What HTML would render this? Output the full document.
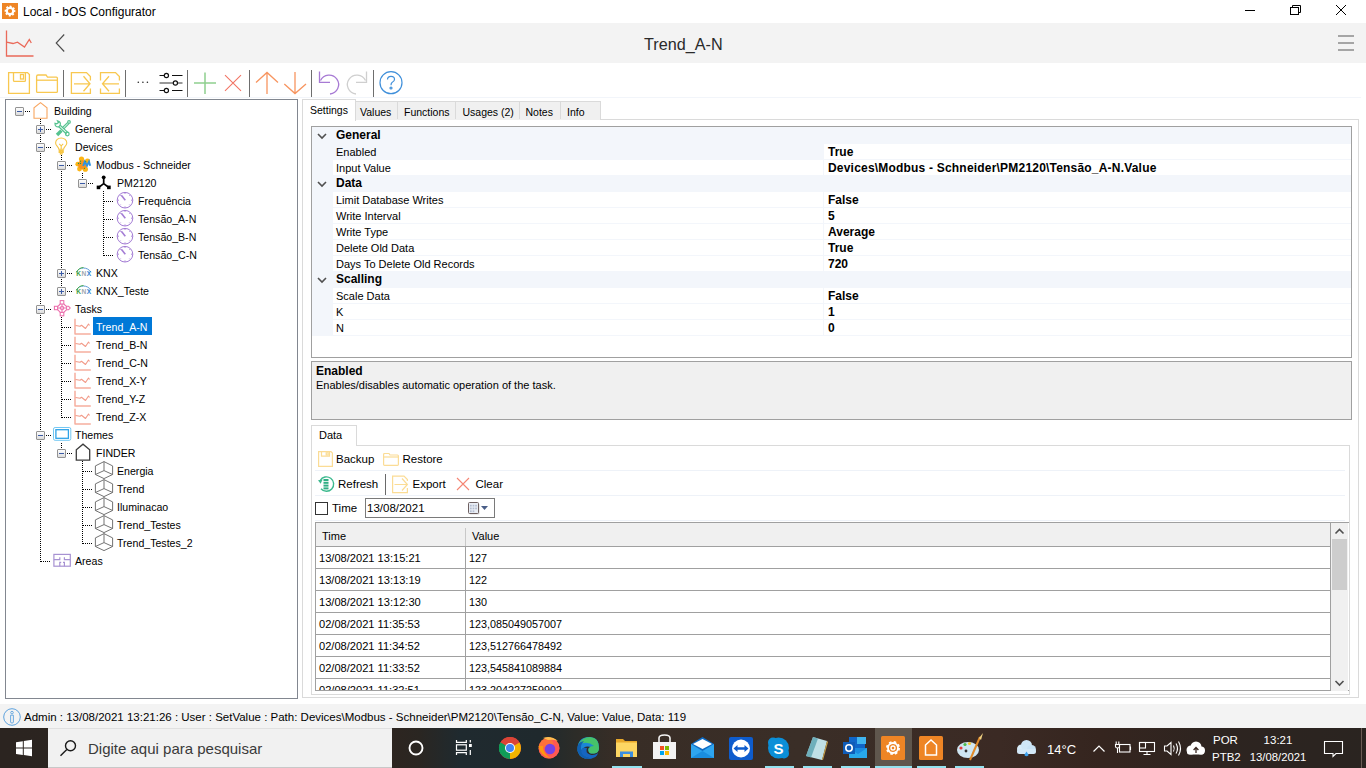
<!DOCTYPE html>
<html><head><meta charset="utf-8">
<style>
*{margin:0;padding:0;box-sizing:border-box}
html,body{width:1366px;height:768px;overflow:hidden;background:#fff;font-family:"Liberation Sans",sans-serif;font-size:11px;color:#000}
.a{position:absolute}
.t{position:absolute;white-space:pre;line-height:1}
svg{position:absolute;overflow:visible}
</style></head><body>
<!-- title bar -->
<div class="a" style="left:0;top:0;width:1366px;height:23px;background:#fff"></div>
<div class="t" style="left:23px;top:6px;font-size:12px">Local - bOS Configurator</div>
<!-- header band -->
<div class="a" style="left:0;top:23px;width:1366px;height:40px;background:#f3f3f3"></div>
<div class="t" style="left:644px;top:35.5px;font-size:16.2px;color:#2a2a2a">Trend_A-N</div>
<!--TOOLBAR-->
<svg style="left:2px;top:3px" width="16" height="16" viewBox="0 0 16 16"><rect width="16" height="16" fill="#ee8525"/><circle cx="8" cy="8" r="4.4" fill="none" stroke="#fff" stroke-width="2" stroke-dasharray="1.9 1.555" transform="rotate(-12 8 8)"/><circle cx="8" cy="8" r="3.2" fill="none" stroke="#fff" stroke-width="2.2"/><rect x="6.6" y="6.6" width="2.8" height="2.8" fill="#ee8525"/></svg>
<!-- header icons -->
<svg style="left:0;top:23px" width="40" height="39" viewBox="0 0 40 39"><g fill="none" stroke="#ea6a5a" stroke-width="1.3"><path d="M6.5 7.5V33H33.5"/><path d="M6.5 19.2L13 20.5L17.5 19.2L24.5 24L29.3 16.4L31.3 20"/></g></svg>
<svg style="left:50px;top:30px" width="20" height="26" viewBox="0 0 20 26"><path d="M14.2 4.5L6.2 13L14.2 21.5" fill="none" stroke="#4a4a4a" stroke-width="1.1"/></svg>
<svg style="left:1330px;top:28px" width="30" height="28" viewBox="0 0 30 28"><g stroke="#8c8c8c" stroke-width="1.6"><path d="M8 8H24M8 15H24M8 22H24"/></g></svg>
<!-- window controls -->
<svg style="left:1240px;top:0" width="126" height="23" viewBox="0 0 126 23"><g fill="none" stroke="#000" stroke-width="1"><path d="M5 10.5H15"/><rect x="50.5" y="7.5" width="8" height="7"/><path d="M52.5 7.5V5.5H60.5V12.5H58.5"/><path d="M96 5L106 15M106 5L96 15"/></g></svg>
<!-- toolbar -->
<svg style="left:0;top:62px" width="420" height="36" viewBox="0 62 420 36">
<g fill="none" stroke="#f8c850" stroke-width="1.3">
<path d="M8.6 72.6H27.5L29.4 74.5V93.4H8.6Z"/><path d="M13.5 72.6V80.5Q13.5 81.4 14.5 81.4H24.5Q25.4 81.4 25.4 80.5V72.6"/><rect x="20.5" y="74.5" width="3" height="4.5"/>
<path d="M36.6 91.4V76.5Q36.6 75 38 75H46L47.5 77.2H56.4Q57.4 77.2 57.4 78.2V91.4Q57.4 92.4 56.4 92.4H37.6Q36.6 92.4 36.6 91.4Z"/><path d="M36.6 80.2H57.4"/>
<path d="M90.4 80.5V76.5L86.5 72.6H71.4V93.4H90.4V88.5"/><path d="M74 83.8H90M83.5 76.3L90 83.8L83.5 91.3"/>
<path d="M100.5 80.5V72.6H115.5L119.4 76.5V80.5M119.4 88.5V93.4H100.5V88.5"/><path d="M102.5 83.8H119M109 76.3L102.5 83.8L109 91.3"/>
</g>
<g fill="#555"><path d="M63 70h1v27h-1zM125 70h1v27h-1zM187 70h1v27h-1zM249 70h1v27h-1zM311 70h1v27h-1zM373 70h1v27h-1z" fill="#6e6e6e"/></g>
<g fill="#222"><circle cx="138.3" cy="82.3" r="0.8"/><circle cx="142.9" cy="82.3" r="0.8"/><circle cx="147.4" cy="82.3" r="0.8"/></g>
<g stroke="#111" stroke-width="1.2" fill="none"><path d="M159.5 75.5H164.3M172 75.5H182.5"/><circle cx="166.4" cy="75.5" r="2.1"/><path d="M159.5 90.5H164.3M172 90.5H182.5"/><circle cx="166.4" cy="90.5" r="2.1"/><path d="M159.5 83H173.2M177.6 83H182.5" stroke="#777" stroke-width="1.5"/><circle cx="175.4" cy="83" r="2.1"/></g>
<g stroke="#8fd08f" stroke-width="1.5"><path d="M205 72.4V94M194 83H216"/></g>
<g stroke="#f27565" stroke-width="1.1"><path d="M225 75.2L241 90.8M241 75.2L225 90.8"/></g>
<g stroke="#f79560" stroke-width="1.3" fill="none"><path d="M267 72.5V94M256 82.5L267 72.5L278 82.5"/><path d="M295 72V93.6M284.3 84L295 93.6L306 84"/></g>
<g stroke="#a77ad4" stroke-width="1.3" fill="none"><path d="M319.5 71.5V82.3H330"/><path d="M320.5 80.5A9.5 9.5 0 1 1 330 94"/></g>
<g stroke="#cfcfcf" stroke-width="1.3" fill="none"><path d="M366.5 71.5V82.3H356"/><path d="M365.5 80.5A9.5 9.5 0 1 0 356 94"/></g>
<g stroke="#3f8fda" stroke-width="1.2" fill="none"><circle cx="391" cy="82.7" r="11"/><path d="M387.5 79.5Q387.5 76.3 391 76.3Q394.5 76.3 394.5 79.3Q394.5 81.3 392.3 82.3Q391 83 391 85.3"/><circle cx="391" cy="88" r="1"/></g>
</svg>
<!--/TOOLBAR-->

<!-- toolbar bottom line -->
<div class="a" style="left:0;top:97px;width:1361px;height:1px;background:#f2f5fa"></div>

<!-- tree panel -->
<div class="a" style="left:5px;top:99px;width:293px;height:600px;border:1px solid #828790;background:#fff"></div>

<!--TREE-->
<div class="a" style="left:25px;top:111px;width:6px;height:1px;background:repeating-linear-gradient(90deg,#000 0 1px,transparent 1px 2px)"></div>
<div class="a" style="left:40px;top:119px;width:1px;height:443px;background:repeating-linear-gradient(180deg,#000 0 1px,transparent 1px 2px)"></div>
<div class="a" style="left:46px;top:129px;width:6px;height:1px;background:repeating-linear-gradient(90deg,#000 0 1px,transparent 1px 2px)"></div>
<div class="a" style="left:46px;top:147px;width:6px;height:1px;background:repeating-linear-gradient(90deg,#000 0 1px,transparent 1px 2px)"></div>
<div class="a" style="left:61px;top:155px;width:1px;height:137px;background:repeating-linear-gradient(180deg,#000 0 1px,transparent 1px 2px)"></div>
<div class="a" style="left:67px;top:165px;width:6px;height:1px;background:repeating-linear-gradient(90deg,#000 0 1px,transparent 1px 2px)"></div>
<div class="a" style="left:82px;top:173px;width:1px;height:11px;background:repeating-linear-gradient(180deg,#000 0 1px,transparent 1px 2px)"></div>
<div class="a" style="left:88px;top:183px;width:6px;height:1px;background:repeating-linear-gradient(90deg,#000 0 1px,transparent 1px 2px)"></div>
<div class="a" style="left:103px;top:191px;width:1px;height:65px;background:repeating-linear-gradient(180deg,#000 0 1px,transparent 1px 2px)"></div>
<div class="a" style="left:104px;top:201px;width:10px;height:1px;background:repeating-linear-gradient(90deg,#000 0 1px,transparent 1px 2px)"></div>
<div class="a" style="left:104px;top:219px;width:10px;height:1px;background:repeating-linear-gradient(90deg,#000 0 1px,transparent 1px 2px)"></div>
<div class="a" style="left:104px;top:237px;width:10px;height:1px;background:repeating-linear-gradient(90deg,#000 0 1px,transparent 1px 2px)"></div>
<div class="a" style="left:104px;top:255px;width:10px;height:1px;background:repeating-linear-gradient(90deg,#000 0 1px,transparent 1px 2px)"></div>
<div class="a" style="left:67px;top:273px;width:6px;height:1px;background:repeating-linear-gradient(90deg,#000 0 1px,transparent 1px 2px)"></div>
<div class="a" style="left:67px;top:291px;width:6px;height:1px;background:repeating-linear-gradient(90deg,#000 0 1px,transparent 1px 2px)"></div>
<div class="a" style="left:46px;top:309px;width:6px;height:1px;background:repeating-linear-gradient(90deg,#000 0 1px,transparent 1px 2px)"></div>
<div class="a" style="left:61px;top:317px;width:1px;height:101px;background:repeating-linear-gradient(180deg,#000 0 1px,transparent 1px 2px)"></div>
<div class="a" style="left:62px;top:327px;width:10px;height:1px;background:repeating-linear-gradient(90deg,#000 0 1px,transparent 1px 2px)"></div>
<div class="a" style="left:62px;top:345px;width:10px;height:1px;background:repeating-linear-gradient(90deg,#000 0 1px,transparent 1px 2px)"></div>
<div class="a" style="left:62px;top:363px;width:10px;height:1px;background:repeating-linear-gradient(90deg,#000 0 1px,transparent 1px 2px)"></div>
<div class="a" style="left:62px;top:381px;width:10px;height:1px;background:repeating-linear-gradient(90deg,#000 0 1px,transparent 1px 2px)"></div>
<div class="a" style="left:62px;top:399px;width:10px;height:1px;background:repeating-linear-gradient(90deg,#000 0 1px,transparent 1px 2px)"></div>
<div class="a" style="left:62px;top:417px;width:10px;height:1px;background:repeating-linear-gradient(90deg,#000 0 1px,transparent 1px 2px)"></div>
<div class="a" style="left:46px;top:435px;width:6px;height:1px;background:repeating-linear-gradient(90deg,#000 0 1px,transparent 1px 2px)"></div>
<div class="a" style="left:61px;top:443px;width:1px;height:11px;background:repeating-linear-gradient(180deg,#000 0 1px,transparent 1px 2px)"></div>
<div class="a" style="left:67px;top:453px;width:6px;height:1px;background:repeating-linear-gradient(90deg,#000 0 1px,transparent 1px 2px)"></div>
<div class="a" style="left:82px;top:461px;width:1px;height:83px;background:repeating-linear-gradient(180deg,#000 0 1px,transparent 1px 2px)"></div>
<div class="a" style="left:83px;top:471px;width:10px;height:1px;background:repeating-linear-gradient(90deg,#000 0 1px,transparent 1px 2px)"></div>
<div class="a" style="left:83px;top:489px;width:10px;height:1px;background:repeating-linear-gradient(90deg,#000 0 1px,transparent 1px 2px)"></div>
<div class="a" style="left:83px;top:507px;width:10px;height:1px;background:repeating-linear-gradient(90deg,#000 0 1px,transparent 1px 2px)"></div>
<div class="a" style="left:83px;top:525px;width:10px;height:1px;background:repeating-linear-gradient(90deg,#000 0 1px,transparent 1px 2px)"></div>
<div class="a" style="left:83px;top:543px;width:10px;height:1px;background:repeating-linear-gradient(90deg,#000 0 1px,transparent 1px 2px)"></div>
<div class="a" style="left:41px;top:561px;width:10px;height:1px;background:repeating-linear-gradient(90deg,#000 0 1px,transparent 1px 2px)"></div>
<div class="a" style="left:15px;top:107px;width:9px;height:9px;border:1px solid #939393;border-radius:1px;background:linear-gradient(#fdfdfd,#dcdcdc)"></div>
<div class="a" style="left:17px;top:111px;width:5px;height:1px;background:#3b5ba6"></div>
<svg style="left:33px;top:102px" width="17" height="17" viewBox="0 0 17 17"><path d="M1 16.2V5.8L7.5 0.6L14 5.8V16.2Z" fill="none" stroke="#f8a660" stroke-width="1.1"/></svg>
<div class="t" style="left:54px;top:105.7px;font-size:10.6px">Building</div>
<div class="a" style="left:36px;top:125px;width:9px;height:9px;border:1px solid #939393;border-radius:1px;background:linear-gradient(#fdfdfd,#dcdcdc)"></div>
<div class="a" style="left:38px;top:129px;width:5px;height:1px;background:#3b5ba6"></div>
<div class="a" style="left:40px;top:127px;width:1px;height:5px;background:#3b5ba6"></div>
<svg style="left:54px;top:120px" width="17" height="17" viewBox="0 0 17 17"><g fill="none" stroke="#55c28f" stroke-width="1.2"><path d="M4.8 6.8L12.6 14.2"/><path d="M6.2 5.2L14 12.6"/><circle cx="13.3" cy="14" r="1.8"/><path d="M1 3.3Q0.8 7.2 4.8 6.8L6.2 5.2Q7.2 1.8 3.5 0.8L4.5 2.6L2.8 3.8Z"/><path d="M8.5 7.5L13.8 2.4M9.8 8.8L15 3.6"/><circle cx="15" cy="2" r="1.3"/></g><path d="M1.8 13.8L6.2 9.4L8.6 11.8L4.2 16.2Z" fill="#55c28f"/></svg>
<div class="t" style="left:75px;top:123.7px;font-size:10.6px">General</div>
<div class="a" style="left:36px;top:143px;width:9px;height:9px;border:1px solid #939393;border-radius:1px;background:linear-gradient(#fdfdfd,#dcdcdc)"></div>
<div class="a" style="left:38px;top:147px;width:5px;height:1px;background:#3b5ba6"></div>
<svg style="left:54px;top:138px" width="17" height="17" viewBox="0 0 17 17"><g fill="none" stroke="#f6c648" stroke-width="1.1"><path d="M4.8 11.2C4.8 9 1.6 7.6 1.6 4.9A5.6 4.9 0 0 1 12.8 4.9C12.8 7.6 9.6 9 9.6 11.2Z"/><path d="M5.2 5.8L7.2 7.8L9.2 5.8M7.2 7.8V11"/></g><rect x="4.6" y="11.8" width="5.2" height="3.2" fill="#f6c648"/><rect x="5.8" y="15" width="2.8" height="1.6" fill="#f6c648"/></svg>
<div class="t" style="left:75px;top:141.7px;font-size:10.6px">Devices</div>
<div class="a" style="left:57px;top:161px;width:9px;height:9px;border:1px solid #939393;border-radius:1px;background:linear-gradient(#fdfdfd,#dcdcdc)"></div>
<div class="a" style="left:59px;top:165px;width:5px;height:1px;background:#3b5ba6"></div>
<svg style="left:75px;top:156px" width="17" height="17" viewBox="0 0 17 17"><g fill="#fdb515"><circle cx="6.5" cy="3" r="2.6"/><circle cx="12.5" cy="5" r="2.6"/><circle cx="2.8" cy="8.2" r="2.4"/><circle cx="4.5" cy="13" r="2.4"/><circle cx="10.3" cy="13.2" r="2.6"/></g><circle cx="7.5" cy="8.8" r="4.6" fill="#f7941d"/><path d="M8.2 10L9.8 5.6L12 9.6L14 5.6L15.2 9.8" fill="none" stroke="#2f93e0" stroke-width="1.9"/><g fill="#12a14a"><circle cx="5.5" cy="5.2" r="0.6"/><circle cx="3.5" cy="7.4" r="0.6"/><circle cx="5.5" cy="7.4" r="0.6"/><circle cx="9.5" cy="12.3" r="0.6"/><circle cx="10.8" cy="5.5" r="0.6"/></g></svg>
<div class="t" style="left:96px;top:159.7px;font-size:10.6px">Modbus - Schneider</div>
<div class="a" style="left:78px;top:179px;width:9px;height:9px;border:1px solid #939393;border-radius:1px;background:linear-gradient(#fdfdfd,#dcdcdc)"></div>
<div class="a" style="left:80px;top:183px;width:5px;height:1px;background:#3b5ba6"></div>
<svg style="left:96px;top:174px" width="17" height="17" viewBox="0 0 17 17"><g transform="translate(0.5,1)"><circle cx="7.2" cy="2.3" r="1.9" fill="#000"/><path d="M7.2 3V8.6L2.4 12.2M7.2 8.6L12 12.2" stroke="#000" stroke-width="1.7" fill="none"/><rect x="0.2" y="10.6" width="3.6" height="3.6" fill="#000"/><rect x="10.6" y="10.6" width="3.6" height="3.6" fill="#000"/></g></svg>
<div class="t" style="left:117px;top:177.7px;font-size:10.6px">PM2120</div>
<svg style="left:117px;top:192px" width="17" height="17" viewBox="0 0 17 17"><circle cx="8" cy="8.2" r="7.8" fill="none" stroke="#a47dd5" stroke-width="1"/><g stroke="#a47dd5" stroke-width="0.9"><path d="M8 0.6V2M8 14.4V15.8M0.4 8.2H2M14 8.2H15.6M2.6 2.8L3.6 3.8M13.4 2.8L12.4 3.8M2.6 13.6L3.6 12.6M13.4 13.6L12.4 12.6"/></g><path d="M4.3 3.3L8.3 8.3" stroke="#a47dd5" stroke-width="1.6"/></svg>
<div class="t" style="left:138px;top:195.7px;font-size:10.6px">Frequência</div>
<svg style="left:117px;top:210px" width="17" height="17" viewBox="0 0 17 17"><circle cx="8" cy="8.2" r="7.8" fill="none" stroke="#a47dd5" stroke-width="1"/><g stroke="#a47dd5" stroke-width="0.9"><path d="M8 0.6V2M8 14.4V15.8M0.4 8.2H2M14 8.2H15.6M2.6 2.8L3.6 3.8M13.4 2.8L12.4 3.8M2.6 13.6L3.6 12.6M13.4 13.6L12.4 12.6"/></g><path d="M4.3 3.3L8.3 8.3" stroke="#a47dd5" stroke-width="1.6"/></svg>
<div class="t" style="left:138px;top:213.7px;font-size:10.6px">Tensão_A-N</div>
<svg style="left:117px;top:228px" width="17" height="17" viewBox="0 0 17 17"><circle cx="8" cy="8.2" r="7.8" fill="none" stroke="#a47dd5" stroke-width="1"/><g stroke="#a47dd5" stroke-width="0.9"><path d="M8 0.6V2M8 14.4V15.8M0.4 8.2H2M14 8.2H15.6M2.6 2.8L3.6 3.8M13.4 2.8L12.4 3.8M2.6 13.6L3.6 12.6M13.4 13.6L12.4 12.6"/></g><path d="M4.3 3.3L8.3 8.3" stroke="#a47dd5" stroke-width="1.6"/></svg>
<div class="t" style="left:138px;top:231.7px;font-size:10.6px">Tensão_B-N</div>
<svg style="left:117px;top:246px" width="17" height="17" viewBox="0 0 17 17"><circle cx="8" cy="8.2" r="7.8" fill="none" stroke="#a47dd5" stroke-width="1"/><g stroke="#a47dd5" stroke-width="0.9"><path d="M8 0.6V2M8 14.4V15.8M0.4 8.2H2M14 8.2H15.6M2.6 2.8L3.6 3.8M13.4 2.8L12.4 3.8M2.6 13.6L3.6 12.6M13.4 13.6L12.4 12.6"/></g><path d="M4.3 3.3L8.3 8.3" stroke="#a47dd5" stroke-width="1.6"/></svg>
<div class="t" style="left:138px;top:249.7px;font-size:10.6px">Tensão_C-N</div>
<div class="a" style="left:57px;top:269px;width:9px;height:9px;border:1px solid #939393;border-radius:1px;background:linear-gradient(#fdfdfd,#dcdcdc)"></div>
<div class="a" style="left:59px;top:273px;width:5px;height:1px;background:#3b5ba6"></div>
<div class="a" style="left:61px;top:271px;width:1px;height:5px;background:#3b5ba6"></div>
<svg style="left:75px;top:264px" width="17" height="17" viewBox="0 0 17 17"><path d="M1.5 8.2C4 2.6 12.5 2.6 16 8.2" fill="none" stroke="#5b9bd5" stroke-width="1"/><path d="M1.5 8.2C3 5 5.5 3.6 8.5 3.5" fill="none" stroke="#4caf50" stroke-width="1"/><text x="1.2" y="12.2" font-family="Liberation Sans" font-size="6.6" font-weight="bold" fill="#a0a6ae" letter-spacing="0.5"><tspan fill="#43a047">K</tspan>N<tspan fill="#2f7fd0">X</tspan></text></svg>
<div class="t" style="left:96px;top:267.7px;font-size:10.6px">KNX</div>
<div class="a" style="left:57px;top:287px;width:9px;height:9px;border:1px solid #939393;border-radius:1px;background:linear-gradient(#fdfdfd,#dcdcdc)"></div>
<div class="a" style="left:59px;top:291px;width:5px;height:1px;background:#3b5ba6"></div>
<div class="a" style="left:61px;top:289px;width:1px;height:5px;background:#3b5ba6"></div>
<svg style="left:75px;top:282px" width="17" height="17" viewBox="0 0 17 17"><path d="M1.5 8.2C4 2.6 12.5 2.6 16 8.2" fill="none" stroke="#5b9bd5" stroke-width="1"/><path d="M1.5 8.2C3 5 5.5 3.6 8.5 3.5" fill="none" stroke="#4caf50" stroke-width="1"/><text x="1.2" y="12.2" font-family="Liberation Sans" font-size="6.6" font-weight="bold" fill="#a0a6ae" letter-spacing="0.5"><tspan fill="#43a047">K</tspan>N<tspan fill="#2f7fd0">X</tspan></text></svg>
<div class="t" style="left:96px;top:285.7px;font-size:10.6px">KNX_Teste</div>
<div class="a" style="left:36px;top:305px;width:9px;height:9px;border:1px solid #939393;border-radius:1px;background:linear-gradient(#fdfdfd,#dcdcdc)"></div>
<div class="a" style="left:38px;top:309px;width:5px;height:1px;background:#3b5ba6"></div>
<svg style="left:54px;top:300px" width="17" height="17" viewBox="0 0 17 17"><g fill="none" stroke="#ec6fad" stroke-width="1.05"><path d="M3.6 6.6L6.3 4M9.8 4L12.6 6.6M3.6 9.6L6.3 12.4M9.8 12.4L12.6 9.6"/><path d="M3.6 8H12.6M8 4V6.4M8 9.8V12.4"/><rect x="6.2" y="0.6" width="3.6" height="3.4"/><rect x="6.2" y="12.4" width="3.6" height="3.4"/><rect x="0.4" y="6.3" width="3.2" height="3.4"/><path d="M12.6 6.3H14.6L16.2 8L14.6 9.7H12.6Z"/><circle cx="8" cy="8" r="1.7"/></g></svg>
<div class="t" style="left:75px;top:303.7px;font-size:10.6px">Tasks</div>
<svg style="left:75px;top:318px" width="18" height="17" viewBox="0 0 18 17"><g fill="none" stroke="#f6ae9f" stroke-linejoin="round"><path d="M0 0.8V16H15.8" stroke-width="1.5"/><path d="M0.5 7.5L5 8.3L6.5 7.3L10.5 10.5L13.5 6L14.5 7.5" stroke-width="1.1" stroke="#f29a88"/></g></svg>
<div class="a" style="left:93px;top:317px;width:59px;height:18px;background:#0078d7"></div>
<div class="t" style="left:96px;top:321.7px;color:#fff;font-size:10.6px">Trend_A-N</div>
<svg style="left:75px;top:336px" width="18" height="17" viewBox="0 0 18 17"><g fill="none" stroke="#f6ae9f" stroke-linejoin="round"><path d="M0 0.8V16H15.8" stroke-width="1.5"/><path d="M0.5 7.5L5 8.3L6.5 7.3L10.5 10.5L13.5 6L14.5 7.5" stroke-width="1.1" stroke="#f29a88"/></g></svg>
<div class="t" style="left:96px;top:339.7px;font-size:10.6px">Trend_B-N</div>
<svg style="left:75px;top:354px" width="18" height="17" viewBox="0 0 18 17"><g fill="none" stroke="#f6ae9f" stroke-linejoin="round"><path d="M0 0.8V16H15.8" stroke-width="1.5"/><path d="M0.5 7.5L5 8.3L6.5 7.3L10.5 10.5L13.5 6L14.5 7.5" stroke-width="1.1" stroke="#f29a88"/></g></svg>
<div class="t" style="left:96px;top:357.7px;font-size:10.6px">Trend_C-N</div>
<svg style="left:75px;top:372px" width="18" height="17" viewBox="0 0 18 17"><g fill="none" stroke="#f6ae9f" stroke-linejoin="round"><path d="M0 0.8V16H15.8" stroke-width="1.5"/><path d="M0.5 7.5L5 8.3L6.5 7.3L10.5 10.5L13.5 6L14.5 7.5" stroke-width="1.1" stroke="#f29a88"/></g></svg>
<div class="t" style="left:96px;top:375.7px;font-size:10.6px">Trend_X-Y</div>
<svg style="left:75px;top:390px" width="18" height="17" viewBox="0 0 18 17"><g fill="none" stroke="#f6ae9f" stroke-linejoin="round"><path d="M0 0.8V16H15.8" stroke-width="1.5"/><path d="M0.5 7.5L5 8.3L6.5 7.3L10.5 10.5L13.5 6L14.5 7.5" stroke-width="1.1" stroke="#f29a88"/></g></svg>
<div class="t" style="left:96px;top:393.7px;font-size:10.6px">Trend_Y-Z</div>
<svg style="left:75px;top:408px" width="18" height="17" viewBox="0 0 18 17"><g fill="none" stroke="#f6ae9f" stroke-linejoin="round"><path d="M0 0.8V16H15.8" stroke-width="1.5"/><path d="M0.5 7.5L5 8.3L6.5 7.3L10.5 10.5L13.5 6L14.5 7.5" stroke-width="1.1" stroke="#f29a88"/></g></svg>
<div class="t" style="left:96px;top:411.7px;font-size:10.6px">Trend_Z-X</div>
<div class="a" style="left:36px;top:431px;width:9px;height:9px;border:1px solid #939393;border-radius:1px;background:linear-gradient(#fdfdfd,#dcdcdc)"></div>
<div class="a" style="left:38px;top:435px;width:5px;height:1px;background:#3b5ba6"></div>
<svg style="left:54px;top:426px" width="18" height="17" viewBox="0 0 18 17"><rect x="-0.5" y="1.5" width="17.3" height="12.8" rx="1.6" fill="none" stroke="#74c8f3" stroke-width="1"/><rect x="1.9" y="3.7" width="12.5" height="8.6" fill="none" stroke="#2fa3e8" stroke-width="1.3"/></svg>
<div class="t" style="left:75px;top:429.7px;font-size:10.6px">Themes</div>
<div class="a" style="left:57px;top:449px;width:9px;height:9px;border:1px solid #939393;border-radius:1px;background:linear-gradient(#fdfdfd,#dcdcdc)"></div>
<div class="a" style="left:59px;top:453px;width:5px;height:1px;background:#3b5ba6"></div>
<svg style="left:75px;top:444px" width="17" height="17" viewBox="0 0 17 17"><path d="M1.3 16.2V5.8L8 0.2L14.7 5.8V16.2Z" fill="none" stroke="#3c3c3c" stroke-width="1.3"/></svg>
<div class="t" style="left:96px;top:447.7px;font-size:10.6px">FINDER</div>
<svg style="left:96px;top:462px" width="18" height="17" viewBox="0 0 18 17"><g fill="none" stroke="#6c6c6c" stroke-width="0.95"><path d="M8 -0.4L16.6 3.9V12.5L8 16.6L-0.6 12.5V3.9Z"/><path d="M8 -0.4V8.6L-0.6 12.5M8 8.6L16.6 12.5"/></g></svg>
<div class="t" style="left:117px;top:465.7px;font-size:10.6px">Energia</div>
<svg style="left:96px;top:480px" width="18" height="17" viewBox="0 0 18 17"><g fill="none" stroke="#6c6c6c" stroke-width="0.95"><path d="M8 -0.4L16.6 3.9V12.5L8 16.6L-0.6 12.5V3.9Z"/><path d="M8 -0.4V8.6L-0.6 12.5M8 8.6L16.6 12.5"/></g></svg>
<div class="t" style="left:117px;top:483.7px;font-size:10.6px">Trend</div>
<svg style="left:96px;top:498px" width="18" height="17" viewBox="0 0 18 17"><g fill="none" stroke="#6c6c6c" stroke-width="0.95"><path d="M8 -0.4L16.6 3.9V12.5L8 16.6L-0.6 12.5V3.9Z"/><path d="M8 -0.4V8.6L-0.6 12.5M8 8.6L16.6 12.5"/></g></svg>
<div class="t" style="left:117px;top:501.7px;font-size:10.6px">Iluminacao</div>
<svg style="left:96px;top:516px" width="18" height="17" viewBox="0 0 18 17"><g fill="none" stroke="#6c6c6c" stroke-width="0.95"><path d="M8 -0.4L16.6 3.9V12.5L8 16.6L-0.6 12.5V3.9Z"/><path d="M8 -0.4V8.6L-0.6 12.5M8 8.6L16.6 12.5"/></g></svg>
<div class="t" style="left:117px;top:519.7px;font-size:10.6px">Trend_Testes</div>
<svg style="left:96px;top:534px" width="18" height="17" viewBox="0 0 18 17"><g fill="none" stroke="#6c6c6c" stroke-width="0.95"><path d="M8 -0.4L16.6 3.9V12.5L8 16.6L-0.6 12.5V3.9Z"/><path d="M8 -0.4V8.6L-0.6 12.5M8 8.6L16.6 12.5"/></g></svg>
<div class="t" style="left:117px;top:537.7px;font-size:10.6px">Trend_Testes_2</div>
<svg style="left:54px;top:552px" width="18" height="17" viewBox="0 0 18 17"><g fill="none" stroke="#a792d2" stroke-width="1.2"><rect x="-0.1" y="2.4" width="16.4" height="11.8"/><path d="M-0.1 7.6H5.8V5.2M10.4 5.2V7.6H16.3M5.8 14.2V10.4H7.2M10.4 14.2V10.4H9"/></g></svg>
<div class="t" style="left:75px;top:555.7px;font-size:10.6px">Areas</div>
<!--/TREE-->
<!-- outer tab page -->
<div class="a" style="left:302px;top:119px;width:1057px;height:579px;border:1px solid #dadada;background:#fff"></div>
<!-- tabs -->
<div class="a" style="left:355px;top:101px;width:246px;height:19px;background:#f0f0f0;border:1px solid #dadada;border-bottom:none"></div>
<div class="a" style="left:397px;top:101px;width:1px;height:18px;background:#dadada"></div>
<div class="a" style="left:455px;top:101px;width:1px;height:18px;background:#dadada"></div>
<div class="a" style="left:519px;top:101px;width:1px;height:18px;background:#dadada"></div>
<div class="a" style="left:560px;top:101px;width:1px;height:18px;background:#dadada"></div>
<div class="a" style="left:302px;top:99px;width:54px;height:22px;background:#fff;border:1px solid #dadada;border-bottom:none"></div>
<div class="t" style="left:310px;top:104.5px;font-size:10.5px">Settings</div>
<div class="t" style="left:360px;top:106.5px;font-size:10.5px">Values</div>
<div class="t" style="left:404px;top:106.5px;font-size:10.5px">Functions</div>
<div class="t" style="left:462.5px;top:106.5px;font-size:10.5px">Usages (2)</div>
<div class="t" style="left:525.5px;top:106.5px;font-size:10.5px">Notes</div>
<div class="t" style="left:567px;top:106.5px;font-size:10.5px">Info</div>

<!-- property grid -->
<div class="a" id="pg" style="left:311px;top:126px;width:1041px;height:232px;border:1px solid #a0a0a0;background:#fff"></div>

<!--PG-->
<div class="a" style="left:312px;top:127px;width:21px;height:209px;background:#f3f6fb"></div>
<div class="a" style="left:312px;top:127px;width:1039px;height:1px;background:#f3f6fb"></div>
<div class="a" style="left:312px;top:128px;width:1039px;height:16px;background:#f3f6fb"></div>
<svg style="left:317px;top:132.5px" width="10" height="6"><path d="M1 1 L5 5 L9 1" stroke="#505050" stroke-width="1.6" fill="none"/></svg>
<div class="t" style="left:336px;top:129px;font-weight:bold;font-size:12px">General</div>
<div class="a" style="left:333px;top:144px;width:490px;height:15px;background:#f3f6fb"></div>
<div class="a" style="left:333px;top:159px;width:1018px;height:1px;background:#f3f6fb"></div>
<div class="a" style="left:823px;top:144px;width:1px;height:15px;background:#f3f6fb"></div>
<div class="t" style="left:336px;top:147px">Enabled</div>
<div class="t" style="left:828px;top:146px;font-weight:bold;font-size:12px;letter-spacing:0">True</div>
<div class="a" style="left:333px;top:160px;width:490px;height:15px;background:#fff"></div>
<div class="a" style="left:333px;top:175px;width:1018px;height:1px;background:#f3f6fb"></div>
<div class="a" style="left:823px;top:160px;width:1px;height:15px;background:#f3f6fb"></div>
<div class="t" style="left:336px;top:163px">Input Value</div>
<div class="t" style="left:828px;top:162px;font-weight:bold;font-size:12px;letter-spacing:0.2px">Devices\Modbus - Schneider\PM2120\Tensão_A-N.Value</div>
<div class="a" style="left:312px;top:176px;width:1039px;height:16px;background:#f3f6fb"></div>
<svg style="left:317px;top:180.5px" width="10" height="6"><path d="M1 1 L5 5 L9 1" stroke="#505050" stroke-width="1.6" fill="none"/></svg>
<div class="t" style="left:336px;top:177px;font-weight:bold;font-size:12px">Data</div>
<div class="a" style="left:333px;top:192px;width:490px;height:15px;background:#fff"></div>
<div class="a" style="left:333px;top:207px;width:1018px;height:1px;background:#f3f6fb"></div>
<div class="a" style="left:823px;top:192px;width:1px;height:15px;background:#f3f6fb"></div>
<div class="t" style="left:336px;top:195px">Limit Database Writes</div>
<div class="t" style="left:828px;top:194px;font-weight:bold;font-size:12px;letter-spacing:0">False</div>
<div class="a" style="left:333px;top:208px;width:490px;height:15px;background:#fff"></div>
<div class="a" style="left:333px;top:223px;width:1018px;height:1px;background:#f3f6fb"></div>
<div class="a" style="left:823px;top:208px;width:1px;height:15px;background:#f3f6fb"></div>
<div class="t" style="left:336px;top:211px">Write Interval</div>
<div class="t" style="left:828px;top:210px;font-weight:bold;font-size:12px;letter-spacing:0">5</div>
<div class="a" style="left:333px;top:224px;width:490px;height:15px;background:#fff"></div>
<div class="a" style="left:333px;top:239px;width:1018px;height:1px;background:#f3f6fb"></div>
<div class="a" style="left:823px;top:224px;width:1px;height:15px;background:#f3f6fb"></div>
<div class="t" style="left:336px;top:227px">Write Type</div>
<div class="t" style="left:828px;top:226px;font-weight:bold;font-size:12px;letter-spacing:0">Average</div>
<div class="a" style="left:333px;top:240px;width:490px;height:15px;background:#fff"></div>
<div class="a" style="left:333px;top:255px;width:1018px;height:1px;background:#f3f6fb"></div>
<div class="a" style="left:823px;top:240px;width:1px;height:15px;background:#f3f6fb"></div>
<div class="t" style="left:336px;top:243px">Delete Old Data</div>
<div class="t" style="left:828px;top:242px;font-weight:bold;font-size:12px;letter-spacing:0">True</div>
<div class="a" style="left:333px;top:256px;width:490px;height:15px;background:#fff"></div>
<div class="a" style="left:333px;top:271px;width:1018px;height:1px;background:#f3f6fb"></div>
<div class="a" style="left:823px;top:256px;width:1px;height:15px;background:#f3f6fb"></div>
<div class="t" style="left:336px;top:259px">Days To Delete Old Records</div>
<div class="t" style="left:828px;top:258px;font-weight:bold;font-size:12px;letter-spacing:0">720</div>
<div class="a" style="left:312px;top:272px;width:1039px;height:16px;background:#f3f6fb"></div>
<svg style="left:317px;top:276.5px" width="10" height="6"><path d="M1 1 L5 5 L9 1" stroke="#505050" stroke-width="1.6" fill="none"/></svg>
<div class="t" style="left:336px;top:273px;font-weight:bold;font-size:12px">Scalling</div>
<div class="a" style="left:333px;top:288px;width:490px;height:15px;background:#fff"></div>
<div class="a" style="left:333px;top:303px;width:1018px;height:1px;background:#f3f6fb"></div>
<div class="a" style="left:823px;top:288px;width:1px;height:15px;background:#f3f6fb"></div>
<div class="t" style="left:336px;top:291px">Scale Data</div>
<div class="t" style="left:828px;top:290px;font-weight:bold;font-size:12px;letter-spacing:0">False</div>
<div class="a" style="left:333px;top:304px;width:490px;height:15px;background:#fff"></div>
<div class="a" style="left:333px;top:319px;width:1018px;height:1px;background:#f3f6fb"></div>
<div class="a" style="left:823px;top:304px;width:1px;height:15px;background:#f3f6fb"></div>
<div class="t" style="left:336px;top:307px">K</div>
<div class="t" style="left:828px;top:306px;font-weight:bold;font-size:12px;letter-spacing:0">1</div>
<div class="a" style="left:333px;top:320px;width:490px;height:15px;background:#fff"></div>
<div class="a" style="left:333px;top:335px;width:1018px;height:1px;background:#f3f6fb"></div>
<div class="a" style="left:823px;top:320px;width:1px;height:15px;background:#f3f6fb"></div>
<div class="t" style="left:336px;top:323px">N</div>
<div class="t" style="left:828px;top:322px;font-weight:bold;font-size:12px;letter-spacing:0">0</div>
<!--/PG-->
<!-- description -->
<div class="a" style="left:311px;top:361px;width:1041px;height:59px;border:1px solid #a0a0a0;background:#f0f0f0"></div>
<div class="t" style="left:316px;top:365px;font-weight:bold;font-size:12px">Enabled</div>
<div class="t" style="left:316px;top:380px">Enables/disables automatic operation of the task.</div>

<!-- data tab page -->
<div class="a" style="left:311px;top:445px;width:1039px;height:250px;border:1px solid #dadada;background:#fff"></div>
<div class="a" style="left:311px;top:425px;width:46px;height:21px;background:#fff;border:1px solid #dadada;border-bottom:none"></div>
<div class="t" style="left:319px;top:430px">Data</div>

<!--DATA-->
<div class="a" style="left:315px;top:470px;width:1030px;height:1px;background:#eef2f8"></div>
<div class="a" style="left:315px;top:495px;width:1030px;height:1px;background:#eef2f8"></div>
<div class="a" style="left:315px;top:520px;width:1030px;height:1px;background:#eef2f8"></div>
<svg style="left:317px;top:450px" width="18" height="18" viewBox="0 0 18 18"><g fill="none" stroke="#fbdc95" stroke-width="1.2"><path d="M1.6 1.6H14L15.4 3V16.4H1.6Z"/><path d="M4.5 1.6V6.2H12.5V1.6"/><rect x="9.2" y="2.8" width="2" height="2.2"/></g></svg>
<div class="t" style="left:336px;top:453.5px;font-size:11.5px">Backup</div>
<svg style="left:382px;top:452px" width="18" height="16" viewBox="0 0 18 16"><g fill="none" stroke="#fbdc95" stroke-width="1.2"><path d="M1.6 12.5V2.5Q1.6 1.5 2.6 1.5H7L8 3H15.5Q16.4 3 16.4 4V12.5Q16.4 13.3 15.5 13.3H2.5Q1.6 13.3 1.6 12.5Z"/><path d="M1.6 5H16.4"/></g></svg>
<div class="t" style="left:402.5px;top:453.5px;font-size:11.5px">Restore</div>
<svg style="left:317px;top:475px" width="18" height="18" viewBox="0 0 18 18"><path d="M3.2 5.5A7.2 7.2 0 1 1 4 13.8" fill="none" stroke="#3cb98e" stroke-width="1.4"/><path d="M1 5.2L5.6 4.6L3.6 8.8Z" fill="#3cb98e"/><g fill="#2fae84"><rect x="6.5" y="4" width="5" height="2"/><rect x="6.5" y="6.8" width="5" height="2"/><rect x="6.5" y="9.6" width="5" height="2"/><rect x="6.5" y="12.4" width="5" height="2"/></g></svg>
<div class="t" style="left:338px;top:478.5px;font-size:11.5px">Refresh</div>
<div class="a" style="left:385px;top:474px;width:1px;height:21px;background:#6a6a6a"></div>
<svg style="left:391px;top:475px" width="18" height="19" viewBox="0 0 18 19"><g fill="none" stroke="#fbdc95" stroke-width="1.2"><path d="M16.4 6V4.5L13 1.1H1.6V17.6H16.4V13"/><path d="M3.5 9.5H16M11 3.5L16.4 9.5L11 15.5"/></g></svg>
<div class="t" style="left:412.5px;top:478.5px;font-size:11.5px">Export</div>
<svg style="left:456px;top:477px" width="14" height="14" viewBox="0 0 14 14"><path d="M1 1L13 13M13 1L1 13" stroke="#f58573" stroke-width="1.1"/></svg>
<div class="t" style="left:475.5px;top:478.5px;font-size:11.5px">Clear</div>
<div class="a" style="left:315px;top:502px;width:13px;height:13px;border:1px solid #333;background:#fff"></div>
<div class="t" style="left:332px;top:502.5px;font-size:11.5px">Time</div>
<div class="a" style="left:365px;top:498px;width:130px;height:20px;border:1px solid #7a7a7a;background:#fff"></div>
<div class="t" style="left:367px;top:502.5px;font-size:11.5px">13/08/2021</div>
<svg style="left:467px;top:501px" width="24" height="15" viewBox="0 0 24 15"><rect x="2.5" y="2.5" width="10" height="11" rx="1.2" fill="#d8d8d8"/><rect x="1.5" y="1.5" width="10" height="11" rx="1" fill="#e9edf4" stroke="#6e6060" stroke-width="1"/><g fill="#b3bdd0"><rect x="3" y="3.8" width="1.7" height="1.7"/><rect x="5.6" y="3.8" width="1.7" height="1.7"/><rect x="8.2" y="3.8" width="1.7" height="1.7"/><rect x="3" y="6.6" width="1.7" height="1.7"/><rect x="5.6" y="6.6" width="1.7" height="1.7"/><rect x="8.2" y="6.6" width="1.7" height="1.7"/><rect x="3" y="9.4" width="1.7" height="1.7"/><rect x="5.6" y="9.4" width="1.7" height="1.7"/></g><path d="M14 5H21L17.5 9Z" fill="#4a5f88"/></svg>
<div class="a" style="left:315px;top:522px;width:1034px;height:169px;border:1px solid #a0a0a0;border-right:none;background:#fff"></div>
<div class="a" style="left:316px;top:523px;width:1015px;height:23px;background:#f0f0f0"></div>
<div class="a" style="left:1330px;top:522px;width:1px;height:169px;background:#a0a0a0"></div>
<div class="a" style="left:316px;top:546px;width:1014px;height:1px;background:#a0a0a0"></div>
<div class="a" style="left:465px;top:528px;width:1px;height:18px;background:#c8c8c8"></div>
<div class="a" style="left:465px;top:547px;width:1px;height:144px;background:#a0a0a0"></div>
<div class="t" style="left:322px;top:530.5px">Time</div>
<div class="t" style="left:472px;top:530.5px">Value</div>
<div class="a" style="left:316px;top:547px;width:1014px;height:143px;overflow:hidden">
<div class="t" style="left:3px;top:5.5px;font-size:11.1px">13/08/2021 13:15:21</div>
<div class="t" style="left:153px;top:5.5px;font-size:10.8px">127</div>
<div class="a" style="left:0px;top:21px;width:1014px;height:1px;background:#a0a0a0"></div>
<div class="t" style="left:3px;top:27.5px;font-size:11.1px">13/08/2021 13:13:19</div>
<div class="t" style="left:153px;top:27.5px;font-size:10.8px">122</div>
<div class="a" style="left:0px;top:43px;width:1014px;height:1px;background:#a0a0a0"></div>
<div class="t" style="left:3px;top:49.5px;font-size:11.1px">13/08/2021 13:12:30</div>
<div class="t" style="left:153px;top:49.5px;font-size:10.8px">130</div>
<div class="a" style="left:0px;top:65px;width:1014px;height:1px;background:#a0a0a0"></div>
<div class="t" style="left:3px;top:71.5px;font-size:11.1px">02/08/2021 11:35:53</div>
<div class="t" style="left:153px;top:71.5px;font-size:10.8px">123,085049057007</div>
<div class="a" style="left:0px;top:87px;width:1014px;height:1px;background:#a0a0a0"></div>
<div class="t" style="left:3px;top:93.5px;font-size:11.1px">02/08/2021 11:34:52</div>
<div class="t" style="left:153px;top:93.5px;font-size:10.8px">123,512766478492</div>
<div class="a" style="left:0px;top:109px;width:1014px;height:1px;background:#a0a0a0"></div>
<div class="t" style="left:3px;top:115.5px;font-size:11.1px">02/08/2021 11:33:52</div>
<div class="t" style="left:153px;top:115.5px;font-size:10.8px">123,545841089884</div>
<div class="a" style="left:0px;top:131px;width:1014px;height:1px;background:#a0a0a0"></div>
<div class="t" style="left:3px;top:137.5px;font-size:11.1px">02/08/2021 11:32:51</div>
<div class="t" style="left:153px;top:137.5px;font-size:10.8px">123,204227259902</div>
</div>
<div class="a" style="left:316px;top:690px;width:1015px;height:1px;background:#a0a0a0"></div>

<div class="a" style="left:1331px;top:523px;width:17px;height:168px;background:#f0f0f0"></div>
<div class="a" style="left:1332px;top:539px;width:15px;height:51px;background:#cdcdcd"></div>
<svg style="left:1331px;top:523px" width="17" height="168" viewBox="0 0 17 168"><g fill="none" stroke="#505050" stroke-width="1.6"><path d="M4.5 10.5L8.5 6.5L12.5 10.5"/><path d="M4.5 158L8.5 162L12.5 158"/></g></svg>
<!--/DATA-->
<!-- status bar -->
<div class="a" style="left:0;top:704px;width:1366px;height:24px;background:#f3f3f3"></div>
<svg style="left:3px;top:708px" width="19" height="19" viewBox="0 0 19 19"><circle cx="9" cy="9" r="8.3" fill="none" stroke="#5fa3de" stroke-width="1"/><circle cx="9" cy="4.6" r="1.3" fill="none" stroke="#5fa3de" stroke-width="0.9"/><path d="M7.6 7.2H10.4V14.2Q10.4 15 9 15Q7.6 15 7.6 14.2Z" fill="none" stroke="#5fa3de" stroke-width="0.9"/></svg>
<div class="t" style="left:24px;top:711.5px;font-size:11.5px">Admin : 13/08/2021 13:21:26 : User : SetValue : Path: Devices\Modbus - Schneider\PM2120\Tensão_C-N, Value: Value, Data: 119</div>

<!-- taskbar -->
<!--TASKBAR-->
<div class="a" style="left:0;top:728px;width:1366px;height:40px;background:linear-gradient(90deg,#2b2420 0px,#2d2520 392px,#2a2622 420px,#1f2a2f 460px,#1f292d 540px,#2c2c28 575px,#382d26 620px,#3a2e27 800px,#3b2a24 1000px,#35251f 1100px,#2d2420 1220px,#2a2420 1366px)"></div>
<div class="a" style="left:48px;top:728px;width:344px;height:40px;background:#f1f1f1;border-top:1px solid #e0e0e0;border-bottom:1px solid #c8c8c8"></div>
<svg style="left:0;top:728px" width="1366" height="40" viewBox="0 728 1366 40">
<path d="M16 742.2L22.8 741.2V747.6H16ZM23.8 741L32 739.8V747.6H23.8ZM16 748.6H22.8V755L16 754ZM23.8 748.6H32V756.3L23.8 755.1Z" fill="#fff"/>
<g fill="none" stroke="#1a1a1a" stroke-width="1.4"><circle cx="70.5" cy="745.8" r="5"/><path d="M66.8 749.5L60.5 755.8"/></g>
<circle cx="416" cy="748" r="6.5" fill="none" stroke="#fff" stroke-width="1.9"/>
<g fill="none" stroke="#fff" stroke-width="1.2"><path d="M456.5 740V742.3H466.3V740M456.5 755V752.7H466.3V755"/><rect x="456.5" y="744.8" width="9.8" height="5.4"/><path d="M470.3 740V742.5M470.3 750V755"/></g><rect x="469" y="744" width="2.8" height="3" fill="#fff"/>
<!-- chrome -->
<g transform="translate(510,748)"><circle r="11" fill="#db4437"/><path d="M0 0L-9.5 5.5A11 11 0 0 1 -9.5 -5.5Z" fill="#0f9d58"/><path d="M-9.5 5.5A11 11 0 0 1 -9.5 -5.5L0 0Z" fill="#0f9d58"/><path d="M0 0L9.5 -5.5A11 11 0 0 0 -9.5 -5.5Z" fill="#db4437"/><path d="M-9.5 -5.5A11 11 0 0 0 0 11L0 0Z" fill="#0f9d58"/><path d="M0 11A11 11 0 0 0 9.5 -5.5L0 0Z" fill="#f4b400"/><circle r="5" fill="#fff"/><circle r="4" fill="#4285f4"/></g>
<!-- firefox -->
<g transform="translate(549,748)"><circle r="10.5" fill="#ff7139"/><path d="M-10.5 0A10.5 10.5 0 0 0 10.5 0Q8 -9 0 -10.5Q6 -6 4 -2Z" fill="#ff4f5e" opacity="0.7"/><circle cx="1" cy="1" r="5.2" fill="#7542e5"/><path d="M-6 -10Q2 -13 9 -7Q4 -9 -1 -8Z" fill="#ffbd4f"/><path d="M-10.5 -2Q-9 8 2 10.5Q-6 6 -6 -2Z" fill="#ff980e"/></g>
<!-- edge -->
<g transform="translate(588,748)"><path d="M-10.5 3Q-11 -11 1 -11Q11 -11 11 0Q11 5 6 5.5Q1 6 0.5 3Q-1 0 3 -1Q-4 -3 -7 3Q-8 10 3 11Q-8 12 -10.5 3Z" fill="#1b86d6"/><path d="M-10 -3Q-6 -11 2 -11Q11 -10.5 11 0Q11 5 6 5.5Q1 6 0.5 3Q0 -2 6 -2Q-1 -8 -10 -3Z" fill="#46c36a"/><path d="M-10.5 3Q-12 -6 -4 -7Q-9 -2 -6 4Q-3 10 5 10.5Q-7 13 -10.5 3Z" fill="#0f5fb0"/><path d="M-7 3Q-6 9 3 10.5Q9 9.5 10 5Q6 8 2 6.5Q-3 5 -1 0Q-6 -1 -7 3Z" fill="#1565c0"/></g>
<!-- explorer -->
<g><path d="M616 739H623L625 741H637V757H616Z" fill="#e8a82a"/><rect x="616" y="742.5" width="21" height="14.5" fill="#fdd663"/><path d="M620 757V751.5H633V757H630V754H623V757Z" fill="#3c8ee0"/></g>
<rect x="612" y="766" width="30" height="2" fill="#93e2ef"/>
<!-- store -->
<g><path d="M653 742H676V759H653Z" fill="#f3f3f3"/><path d="M659 742V738Q659 735 664.5 735Q670 735 670 738V742" fill="none" stroke="#f3f3f3" stroke-width="1.6"/><rect x="660" y="746" width="4" height="4" fill="#f25022"/><rect x="665" y="746" width="4" height="4" fill="#7fba00"/><rect x="660" y="751" width="4" height="4" fill="#00a4ef"/><rect x="665" y="751" width="4" height="4" fill="#ffb900"/></g>
<!-- mail -->
<g><path d="M691 744L702.5 737L714 744V758H691Z" fill="#0f6cc4"/><path d="M693 744L702.5 739L712 744L702.5 749Z" fill="#fff"/><path d="M691 744L702.5 751L714 744V758H691Z" fill="#2ea5ef"/><path d="M691 758L702.5 751L714 758Z" fill="#1a8ee0"/></g>
<!-- teamviewer -->
<g><rect x="729" y="737" width="24" height="23" rx="2" fill="#0e5ccd"/><circle cx="741" cy="748.5" r="9" fill="#fff"/><path d="M733.5 748.5L737.5 745V747.3H744.5V745L748.5 748.5L744.5 752V749.7H737.5V752Z" fill="#0e5ccd"/></g>
<!-- skype -->
<g><circle cx="778.5" cy="748" r="10.5" fill="#0b8fd8"/><circle cx="773" cy="742.5" r="5" fill="#0b8fd8"/><circle cx="784" cy="753.5" r="5" fill="#0b8fd8"/><text x="778.5" y="753.5" font-family="Liberation Sans" font-size="15" font-weight="bold" fill="#fff" text-anchor="middle">S</text></g>
<rect x="765" y="766" width="29" height="2" fill="#93e2ef"/>
<!-- notepad -->
<g><path d="M806 756L813 737L827 741L822 760Z" fill="#bfe0e6"/><path d="M806 756L813 737L818 738.5L811 757.5Z" fill="#5aa3b0" opacity="0.8"/><path d="M822 760L827 741L828 742L823 760Z" fill="#c9a24a"/></g>
<rect x="803" y="766" width="29" height="2" fill="#93e2ef"/>
<!-- outlook -->
<g><rect x="849" y="737" width="16" height="11" fill="#1066c9"/><rect x="857" y="737" width="9" height="7" fill="#40b5f0"/><path d="M849 748H867V758H849Z" fill="#1a8be0"/><path d="M849 748L858 754L867 748V758H849Z" fill="#28a8ea"/><rect x="843" y="742" width="12" height="12" fill="#0f5cb8"/><circle cx="849" cy="748" r="3.2" fill="none" stroke="#fff" stroke-width="1.6"/></g>
<rect x="841" y="766" width="29" height="2" fill="#93e2ef"/>
<!-- bos active -->
<rect x="875" y="728" width="37" height="40" fill="#5f564d"/>
<rect x="881" y="736" width="24" height="24" rx="1.5" fill="#ee8525"/>
<g transform="translate(893,748)"><circle r="5.6" fill="none" stroke="#fff" stroke-width="2.8" stroke-dasharray="2.3 2.1"/><circle r="5" fill="none" stroke="#fff" stroke-width="1.8"/><circle r="2" fill="none" stroke="#fff" stroke-width="1.4"/></g>
<rect x="875" y="766" width="37" height="2" fill="#93e2ef"/>
<!-- house -->
<rect x="919" y="736" width="24" height="24" rx="1.5" fill="#ee8525"/>
<path d="M925.5 755V745L931 740L936.5 745V755Z" fill="none" stroke="#fff" stroke-width="1.5"/>
<rect x="917" y="766" width="29" height="2" fill="#93e2ef"/>
<!-- paint -->
<g><ellipse cx="968" cy="750" rx="11" ry="8" fill="#cfe6f2"/><circle cx="961" cy="748" r="1.6" fill="#e53c3c"/><circle cx="965" cy="744.5" r="1.6" fill="#4cbb4c"/><circle cx="969.5" cy="743.5" r="1.6" fill="#f4c430"/><circle cx="966" cy="751" r="1.4" fill="#333"/><path d="M970 760L980 737" stroke="#e08a2a" stroke-width="2"/><path d="M979 738L983 733L981 740Z" fill="#f0d080"/></g>
<rect x="955" y="766" width="29" height="2" fill="#93e2ef"/>
<!-- weather -->
<g><circle cx="1021.5" cy="749" r="4.5" fill="#d8ecf8"/><circle cx="1026.5" cy="745.5" r="5.5" fill="#cfe6f6"/><circle cx="1031.5" cy="749.5" r="4.5" fill="#c8e2f4"/><rect x="1017" y="749" width="19" height="5" rx="2.5" fill="#d3e8f7"/><path d="M1026.5 751.5L1024.3 755Q1026.5 757.5 1028.7 755Z" fill="#3aa0ee"/></g>
<text x="1047" y="753.5" font-family="Liberation Sans" font-size="13" fill="#fff">14°C</text>
<path d="M1093.5 751.5L1099 746L1104.5 751.5" fill="none" stroke="#fff" stroke-width="1.2"/>
<g fill="none" stroke="#fff" stroke-width="1.1"><rect x="1119.5" y="744.5" width="10.5" height="7.5"/><path d="M1130.5 746.5V750"/><path d="M1116.2 741.5V744.5M1118.8 741.5V744.5"/><path d="M1115.5 744.5H1119.5V746.5Q1119.5 748 1117.5 748Q1115.5 748 1115.5 746.5Z"/><path d="M1117.5 748V753"/><rect x="1139.5" y="742.5" width="15" height="9"/><path d="M1147 751.5V754.5M1143.5 754.5H1150.5"/><rect x="1139.5" y="742.5" width="6" height="5.5"/><path d="M1164.5 746H1167L1171 742.5V754.5L1167 751H1164.5Z"/><path d="M1173.5 745.5Q1175 748.5 1173.5 751.5M1176 743.5Q1179 748.5 1176 753.5M1178.5 741.5Q1182.5 748.5 1178.5 755.5"/></g>
<g fill="#fff"><circle cx="1191" cy="750" r="4.5"/><circle cx="1196" cy="747" r="5.5"/><circle cx="1201" cy="750.5" r="4"/><rect x="1187" y="750" width="17" height="4.5" rx="2"/></g><path d="M1196 753V748M1193.6 750L1196 747.5L1198.4 750" stroke="#3a2822" stroke-width="1.3" fill="none"/>
<text x="1213" y="744" font-family="Liberation Sans" font-size="11.5" fill="#fff">POR</text>
<text x="1212" y="761" font-family="Liberation Sans" font-size="11.5" fill="#fff">PTB2</text>
<text x="1278" y="744" font-family="Liberation Sans" font-size="11.5" fill="#fff" text-anchor="middle">13:21</text>
<text x="1278" y="761" font-family="Liberation Sans" font-size="11.3" fill="#fff" text-anchor="middle">13/08/2021</text>
<path d="M1324.5 741.5H1342.5V753.5H1336L1333 756.5V753.5H1324.5Z" fill="none" stroke="#fff" stroke-width="1.1"/>
<rect x="1361" y="728" width="1" height="40" fill="#6a5c55"/>
</svg>
<div class="t" style="left:88px;top:740.5px;font-size:15px;color:#3a3a3a">Digite aqui para pesquisar</div>
<!--/TASKBAR-->

</body></html>
